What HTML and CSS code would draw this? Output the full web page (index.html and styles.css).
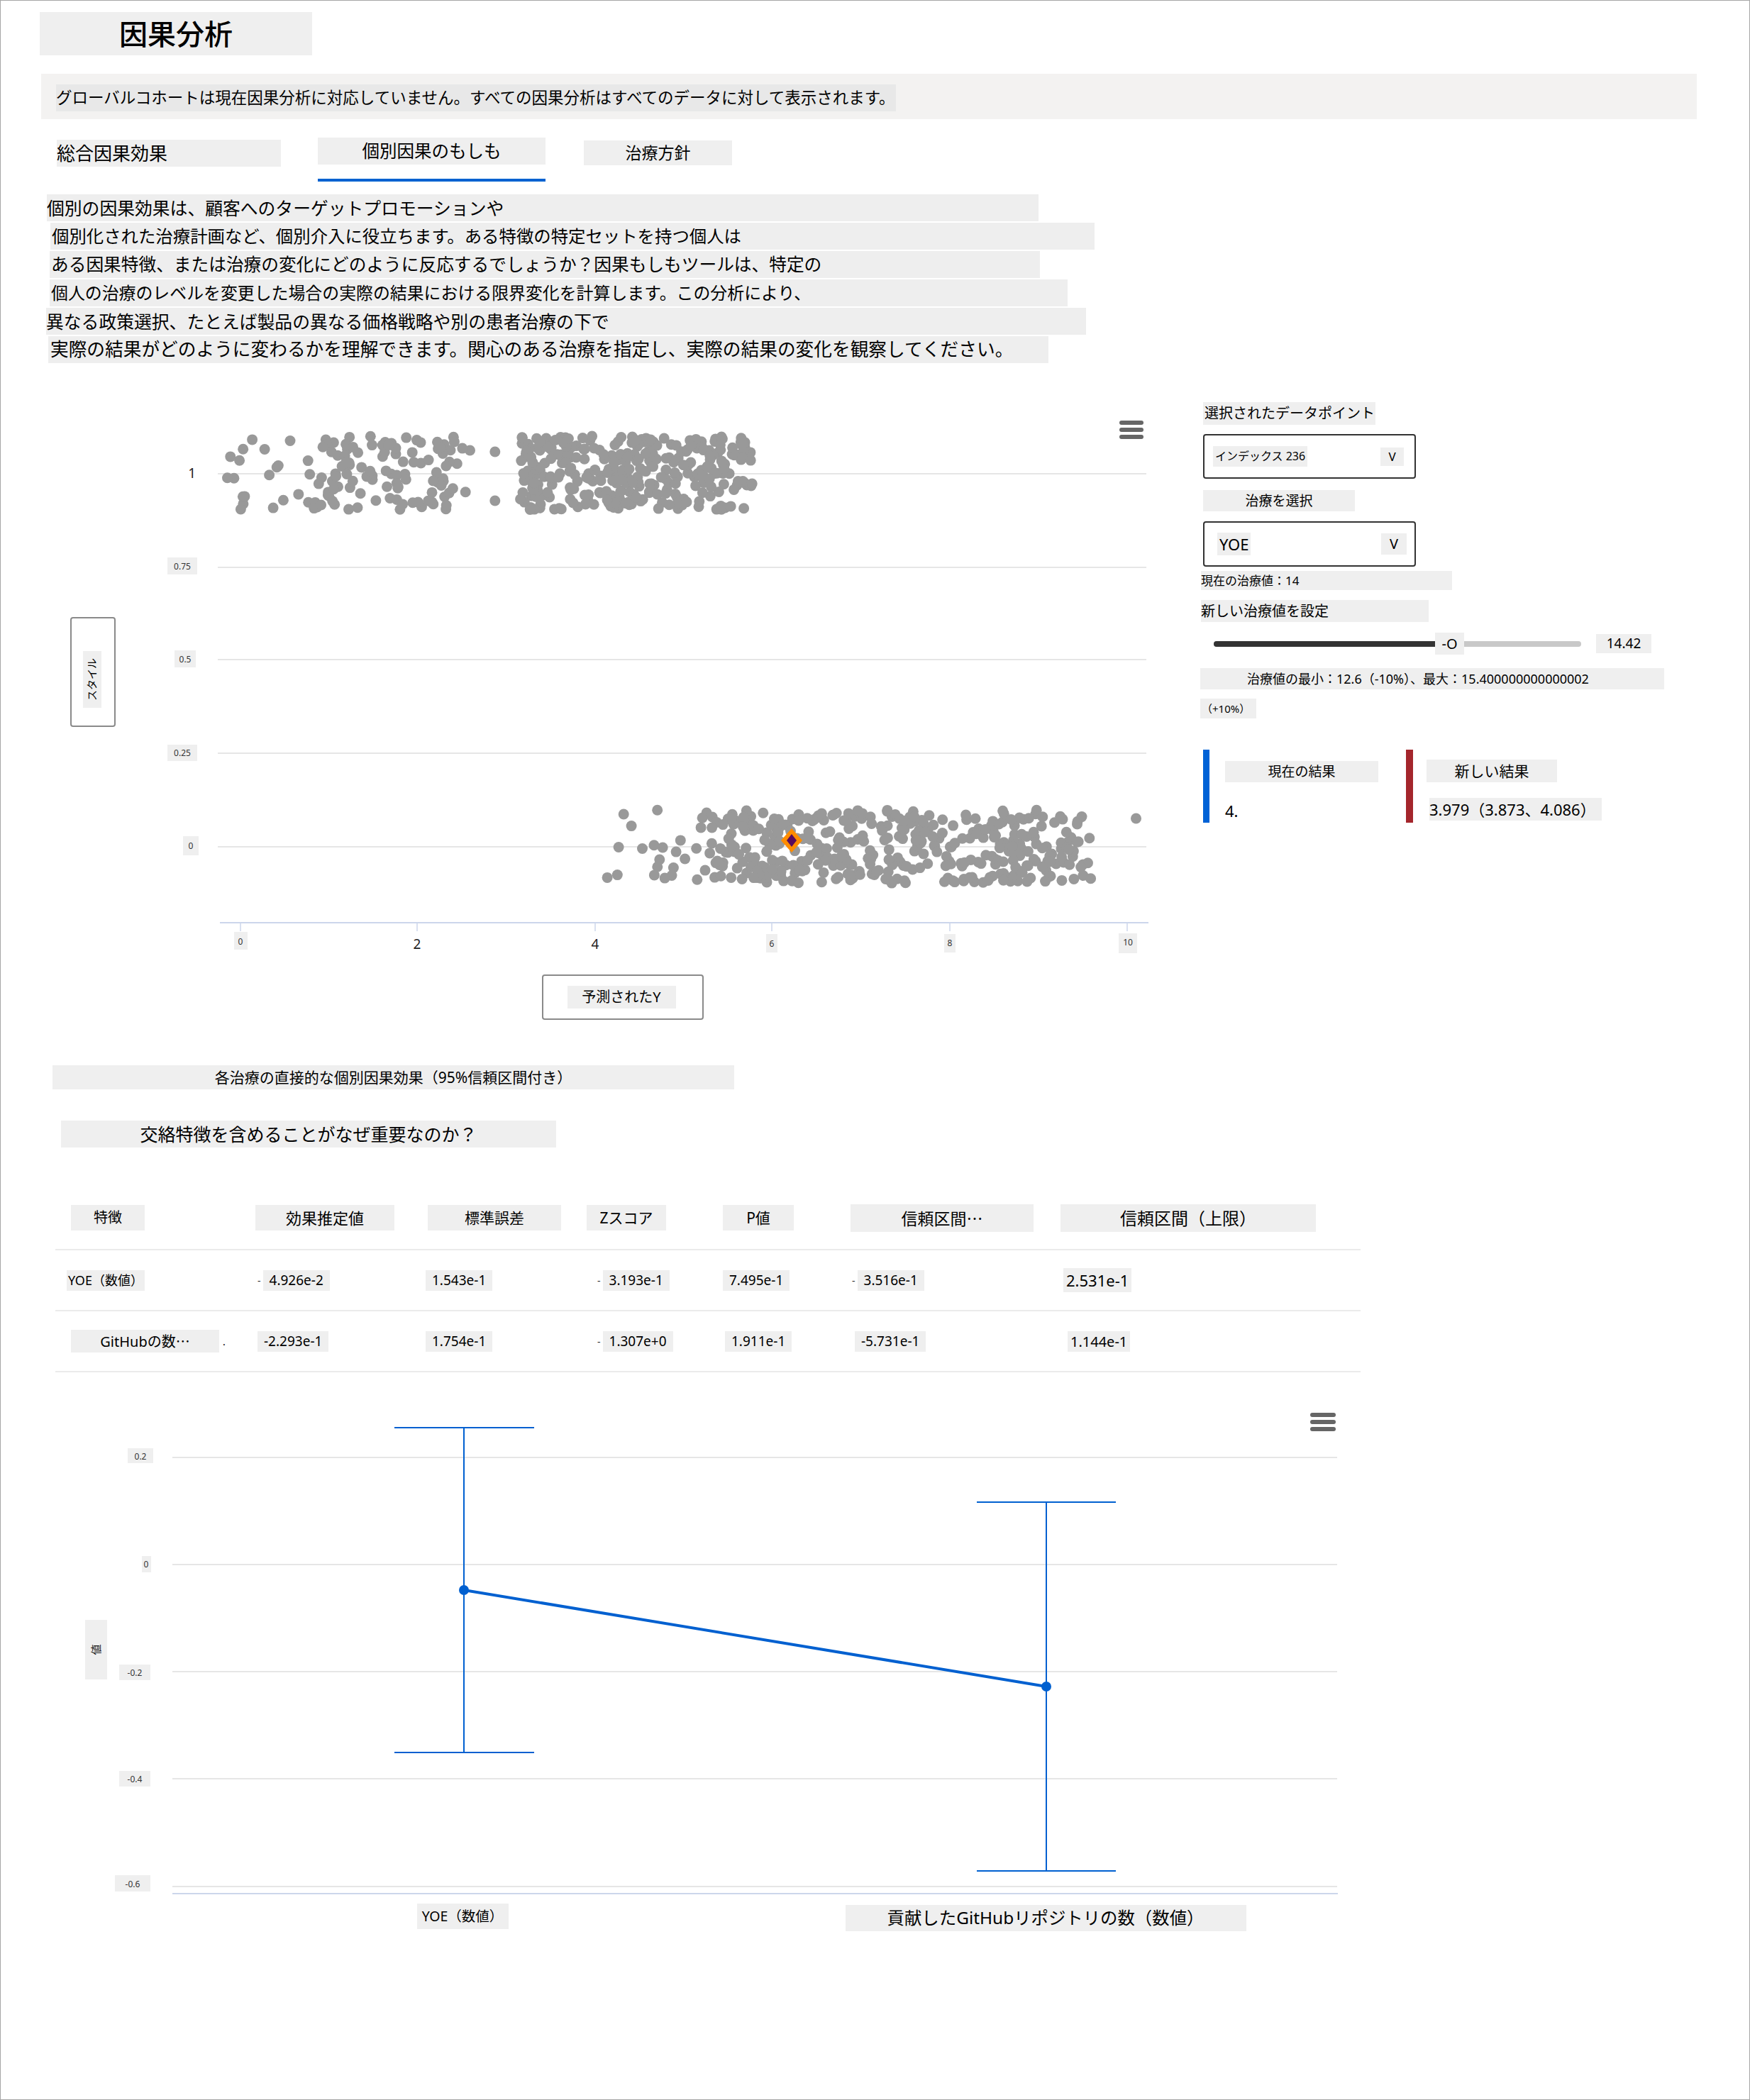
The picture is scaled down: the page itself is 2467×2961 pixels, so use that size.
FILE: index.html
```html
<!DOCTYPE html>
<html lang="ja">
<head>
<meta charset="utf-8">
<title>因果分析</title>
<link rel="stylesheet" href="styles.css">
</head>
<body>
<div class="page">
  <div class="title-box"><h1 class="title">因果分析</h1></div>

  <div class="notice"><span class="notice-text">グローバルコホートは現在因果分析に対応していません。すべての因果分析はすべてのデータに対して表示されます。</span></div>

  <div class="tabs">
    <div class="tab tab-1">総合因果効果</div>
    <div class="tab-group">
      <div class="tab tab-2">個別因果のもしも</div>
      <div class="tab-underline"></div>
    </div>
    <div class="tab tab-3">治療方針</div>
  </div>

  <div class="intro">
    <div class="line l1">個別の因果効果は、顧客へのターゲットプロモーションや</div>
    <div class="line l2">個別化された治療計画など、個別介入に役立ちます。ある特徴の特定セットを持つ個人は</div>
    <div class="line l3">ある因果特徴、または治療の変化にどのように反応するでしょうか？因果もしもツールは、特定の</div>
    <div class="line l4">個人の治療のレベルを変更した場合の実際の結果における限界変化を計算します。この分析により、</div>
    <div class="line l5">異なる政策選択、たとえば製品の異なる価格戦略や別の患者治療の下で</div>
    <div class="line l6">実際の結果がどのように変わるかを理解できます。関心のある治療を指定し、実際の結果の変化を観察してください。</div>
  </div>

  <div class="main">
    <svg class="scatter" width="1600" height="900" viewBox="60 560 1600 900" xmlns="http://www.w3.org/2000/svg">
      <g class="grid">
        <line x1="307" y1="669" x2="1616" y2="669"/>
        <line x1="307" y1="801" x2="1616" y2="801"/>
        <line x1="307" y1="931" x2="1616" y2="931"/>
        <line x1="307" y1="1063" x2="1616" y2="1063"/>
        <line x1="307" y1="1195" x2="1616" y2="1195"/>
      </g>
      <line class="axis" x1="310" y1="1302" x2="1619" y2="1302"/>
      <g class="ticks">
        <line x1="339" y1="1302" x2="339" y2="1314"/>
        <line x1="588" y1="1302" x2="588" y2="1314"/>
        <line x1="839" y1="1302" x2="839" y2="1314"/>
        <line x1="1088" y1="1302" x2="1088" y2="1314"/>
        <line x1="1339" y1="1302" x2="1339" y2="1314"/>
        <line x1="1589" y1="1302" x2="1589" y2="1314"/>
      </g>
      <g class="lblbg">
        <rect x="236" y="787" width="42" height="24"/>
        <rect x="246" y="918" width="30" height="24"/>
        <rect x="236" y="1051" width="42" height="23"/>
        <rect x="258" y="1180" width="22" height="27"/>
        <rect x="330" y="1315" width="19" height="25"/>
        <rect x="1080" y="1318" width="16" height="26"/>
        <rect x="1331" y="1318" width="16" height="26"/>
        <rect x="1577" y="1317" width="26" height="28"/>
      </g>
      <g class="lbl">
        <text class="big" x="276" y="675" text-anchor="end">1</text>
        <text x="257" y="804" text-anchor="middle">0.75</text>
        <text x="261" y="935" text-anchor="middle">0.5</text>
        <text x="257" y="1067" text-anchor="middle">0.25</text>
        <text x="269" y="1198" text-anchor="middle">0</text>
        <text x="339" y="1333" text-anchor="middle">0</text>
        <text class="big" x="588" y="1339" text-anchor="middle">2</text>
        <text class="big" x="839" y="1339" text-anchor="middle">4</text>
        <text x="1088" y="1336" text-anchor="middle">6</text>
        <text x="1339" y="1335" text-anchor="middle">8</text>
        <text x="1590" y="1334" text-anchor="middle">10</text>
      </g>
      <g id="scatter-points" class="pts"></g>
      <polygon class="sel-outer" points="1116,1169 1131,1186 1116,1203 1101,1186"/>
      <polygon class="sel-inner" points="1116,1177 1123,1186 1116,1195 1109,1186"/>
      <g class="menu">
        <rect x="1578" y="594" width="34" height="6" rx="3"/>
        <rect x="1578" y="604" width="34" height="6" rx="3"/>
        <rect x="1578" y="614" width="34" height="6" rx="3"/>
      </g>
      <rect class="title-frame" x="100" y="872" width="62" height="153" rx="3"/>
      <rect class="lblbg-r" x="117" y="919" width="26" height="80"/>
      <text class="axis-title-sm" transform="translate(135 959) rotate(-90)" text-anchor="middle">スタイル</text>
      <rect class="title-frame" x="765" y="1376" width="226" height="62" rx="3"/>
      <rect class="lblbg-r" x="800" y="1391" width="153" height="32"/>
      <text class="axis-title" x="876" y="1414" text-anchor="middle">予測されたY</text>
    </svg>

    <div class="panel">
      <div class="p-label">選択されたデータポイント</div>
      <div class="dropdown dd1">
        <span class="dd-text">インデックス 236</span>
        <span class="dd-chev">V</span>
      </div>
      <div class="p-select-label">治療を選択</div>
      <div class="dropdown dd2">
        <span class="dd-text">YOE</span>
        <span class="dd-chev">V</span>
      </div>
      <div class="p-current">現在の治療値：14</div>
      <div class="p-newlabel">新しい治療値を設定</div>
      <div class="slider-row">
        <div class="slider">
          <div class="slider-fill"></div>
          <div class="slider-thumb">-O</div>
        </div>
        <div class="slider-value">14.42</div>
      </div>
      <div class="p-range">治療値の最小：12.6（-10%）、最大：15.400000000000002</div>
      <div class="p-range2">（+10%）</div>
      <div class="results">
        <div class="result result-cur">
          <div class="bar bar-blue"></div>
          <div class="res-body">
            <div class="res-label">現在の結果</div>
            <div class="res-value cur-value">4.</div>
          </div>
        </div>
        <div class="result result-new">
          <div class="bar bar-red"></div>
          <div class="res-body new-body">
            <div class="res-label new-label">新しい結果</div>
            <div class="res-value new-value">3.979（3.873、4.086）</div>
          </div>
        </div>
      </div>
    </div>
  </div>

  <div class="sec-title">各治療の直接的な個別因果効果（95%信頼区間付き）</div>
  <div class="why">交絡特徴を含めることがなぜ重要なのか？</div>

  <div class="tbl">
    <div class="trow thead">
      <div class="cell"><span class="hbox h1">特徴</span></div>
      <div class="cell"><span class="hbox h2">効果推定値</span></div>
      <div class="cell"><span class="hbox h3">標準誤差</span></div>
      <div class="cell"><span class="hbox h4">Zスコア</span></div>
      <div class="cell"><span class="hbox h5">P値</span></div>
      <div class="cell"><span class="hbox h6">信頼区間<span class="ell">…</span></span></div>
      <div class="cell"><span class="hbox h7">信頼区間（上限）</span></div>
    </div>
    <div class="trow r1">
      <div class="cell"><span class="vbox name">YOE（数値）</span></div>
      <div class="cell"><span class="neg">-</span><span class="vbox">4.926e-2</span></div>
      <div class="cell"><span class="vbox">1.543e-1</span></div>
      <div class="cell"><span class="neg">-</span><span class="vbox">3.193e-1</span></div>
      <div class="cell"><span class="vbox">7.495e-1</span></div>
      <div class="cell"><span class="neg">-</span><span class="vbox">3.516e-1</span></div>
      <div class="cell"><span class="vbox big">2.531e-1</span></div>
    </div>
    <div class="trow r2">
      <div class="cell"><span class="vbox name wide">GitHubの数<span class="ell">…</span></span><span class="dot">.</span></div>
      <div class="cell"><span class="vbox">-2.293e-1</span></div>
      <div class="cell"><span class="vbox">1.754e-1</span></div>
      <div class="cell"><span class="neg">-</span><span class="vbox">1.307e+0</span></div>
      <div class="cell"><span class="vbox">1.911e-1</span></div>
      <div class="cell"><span class="vbox">-5.731e-1</span></div>
      <div class="cell"><span class="vbox mid">1.144e-1</span></div>
    </div>
  </div>

  <svg class="ci-chart" width="1880" height="780" viewBox="60 1960 1880 780" xmlns="http://www.w3.org/2000/svg">
    <g class="grid">
      <line x1="243" y1="2058" x2="1885" y2="2058"/>
      <line x1="243" y1="2209" x2="1885" y2="2209"/>
      <line x1="243" y1="2360" x2="1885" y2="2360"/>
      <line x1="243" y1="2511" x2="1885" y2="2511"/>
      <line x1="243" y1="2663" x2="1885" y2="2663"/>
    </g>
    <line class="axis" x1="243" y1="2673" x2="1886" y2="2673"/>
    <g class="lblbg">
      <rect x="180" y="2045" width="36" height="21"/>
      <rect x="200" y="2197" width="13" height="23"/>
      <rect x="168" y="2350" width="44" height="22"/>
      <rect x="168" y="2500" width="44" height="22"/>
      <rect x="162" y="2647" width="50" height="23"/>
      <rect x="120" y="2287" width="31" height="84"/>
    </g>
    <g class="lbl">
      <text x="198" y="2061" text-anchor="middle">0.2</text>
      <text x="206" y="2213" text-anchor="middle">0</text>
      <text x="190" y="2366" text-anchor="middle">-0.2</text>
      <text x="190" y="2516" text-anchor="middle">-0.4</text>
      <text x="187" y="2664" text-anchor="middle">-0.6</text>
      <text class="ytitle" transform="translate(141 2329) rotate(-90)" text-anchor="middle">値</text>
    </g>
    <g class="err">
      <line x1="654" y1="2016" x2="654" y2="2474"/>
      <line x1="556" y1="2016" x2="753" y2="2016"/>
      <line x1="556" y1="2474" x2="753" y2="2474"/>
      <line x1="1475" y1="2121" x2="1475" y2="2641"/>
      <line x1="1377" y1="2121" x2="1573" y2="2121"/>
      <line x1="1377" y1="2641" x2="1573" y2="2641"/>
    </g>
    <line class="series" x1="654" y1="2245" x2="1475" y2="2381"/>
    <circle class="marker" cx="654" cy="2245" r="7"/>
    <circle class="marker" cx="1475" cy="2381" r="7"/>
    <g class="menu">
      <rect x="1847" y="1995" width="36" height="6" rx="3"/>
      <rect x="1847" y="2005" width="36" height="6" rx="3"/>
      <rect x="1847" y="2015" width="36" height="6" rx="3"/>
    </g>
    <rect class="lblbg-r" x="588" y="2687" width="129" height="36"/>
    <text class="xcat" x="652" y="2712" text-anchor="middle">YOE（数値）</text>
    <rect class="lblbg-r" x="1192" y="2689" width="565" height="37"/>
    <text class="xcat xcat-lg" x="1474" y="2716" text-anchor="middle">貢献したGitHubリポジトリの数（数値）</text>
  </svg>
</div>
<script src="script.js"></script>
</body>
</html>
```

FILE: styles.css
```css
* { box-sizing: border-box; }
html, body { margin: 0; padding: 0; background: #ffffff; }
body {
  font-family: "Noto Sans", "Noto Sans CJK JP", sans-serif;
  color: #000000;
}
.page {
  width: 2467px;
  height: 2961px;
  border: 1px solid #a6a6a6;
  overflow: hidden;
}

/* title */
.title-box {
  margin: 16px 0 0 55px;
  width: 384px;
  height: 61px;
  background: #efefef;
  display: flex;
  align-items: center;
  justify-content: center;
}
.title { margin: 0; font-size: 40px; font-weight: 500; line-height: 1; }

/* notice */
.notice {
  margin: 26px 0 0 57px;
  width: 2334px;
  height: 64px;
  background: #f3f2f1;
  padding: 15px 0 0 21px;
}
.notice-text {
  display: block;
  width: 1184px;
  height: 38px;
  background: #e8e8e8;
  font-size: 22.5px;
  line-height: 38px;
  white-space: nowrap;
}

/* tabs */
.tabs { display: flex; align-items: flex-start; margin: 26px 0 0 79px; }
.tab { background: #efefef; white-space: nowrap; }
.tab-1 { margin-top: 3px; width: 316px; height: 38px; font-size: 26px; line-height: 38px; }
.tab-group { margin-left: 52px; width: 321px; }
.tab-2 { height: 38px; font-size: 24.5px; line-height: 38px; text-align: center; }
.tab-underline { margin-top: 20px; height: 4px; background: #0062d0; }
.tab-3 { margin: 4px 0 0 54px; width: 209px; height: 35px; font-size: 23px; line-height: 35px; text-align: center; }

/* intro */
.intro { margin-top: 18px; }
.line {
  height: 38px;
  margin-top: 2px;
  background: #eeeeee;
  line-height: 38px;
  white-space: nowrap;
}
.l1 { margin: 0 0 0 65px; width: 1398px; font-size: 24.8px; }
.l2 { margin-left: 70px; width: 1472px; padding-left: 2px; font-size: 24.4px; }
.l3 { margin-left: 69px; width: 1396px; padding-left: 2px; font-size: 24.7px; }
.l4 { margin-left: 69px; width: 1435px; padding-left: 2px; font-size: 23.9px; }
.l5 { margin-left: 64px; width: 1466px; font-size: 24.8px; }
.l6 { margin-left: 67px; width: 1410px; padding-left: 3px; font-size: 25.7px; }

/* main area */
.main { display: flex; align-items: flex-start; margin-top: 47px; }
.scatter { display: block; flex-shrink: 0; margin-left: 59px; }
.grid line { stroke: #e6e6e6; stroke-width: 2; }
.axis { stroke: #ccd6eb; stroke-width: 2; }
.ticks line { stroke: #ccd6eb; stroke-width: 1.5; }
.lblbg rect, .lblbg-r { fill: #efefef; }
.lbl text { font-family: "Noto Sans", "Noto Sans CJK JP", sans-serif; font-size: 12px; fill: #333333; }
.lbl text.big { font-size: 19px; fill: #222222; }
.pts circle { fill: #999999; }
.sel-outer { fill: #ff8c00; }
.sel-inner { fill: #5a0b5c; }
.menu rect { fill: #666666; }
.title-frame { fill: #ffffff; stroke: #8a8a8a; stroke-width: 2; }
.axis-title { font-family: "Noto Sans", "Noto Sans CJK JP", sans-serif; font-size: 20px; fill: #000000; }
.axis-title-sm { font-family: "Noto Sans CJK JP", sans-serif; font-size: 15px; fill: #000000; }

/* right panel */
.panel {
  margin-left: 32px;
  padding-top: 8px;
  width: 700px;
  display: flex;
  flex-direction: column;
  align-items: flex-start;
}
.p-label {
  margin-left: 4px;
  width: 243px;
  height: 32px;
  background: #efefef;
  font-size: 20px;
  line-height: 32px;
  padding-left: 2px;
  white-space: nowrap;
}
.dropdown {
  margin: 13px 0 0 4px;
  width: 300px;
  height: 63px;
  border: 2px solid #333333;
  border-radius: 4px;
  display: flex;
  align-items: center;
  justify-content: space-between;
  padding: 0 15px 0 12px;
}
.dd-text { background: #efefef; font-size: 16px; height: 29px; line-height: 29px; padding: 0 3px; }
.dd-chev { background: #efefef; font-size: 17px; width: 33px; height: 26px; line-height: 26px; text-align: center; }
.p-select-label {
  margin: 16px 0 0 4px;
  width: 214px;
  height: 30px;
  background: #efefef;
  font-size: 19px;
  line-height: 30px;
  text-align: center;
}
.dd2 { margin-top: 14px; height: 64px; padding-left: 18px; padding-right: 11px; }
.dd2 .dd-text { font-size: 22px; height: 32px; line-height: 32px; }
.dd2 .dd-chev { font-size: 20px; width: 36px; height: 30px; line-height: 30px; }
.p-current {
  margin: 6px 0 0 1px;
  width: 354px;
  height: 27px;
  background: #efefef;
  font-size: 17px;
  line-height: 27px;
}
.p-newlabel {
  margin: 14px 0 0 1px;
  width: 321px;
  height: 31px;
  background: #efefef;
  font-size: 20px;
  line-height: 31px;
}
.slider-row { margin-top: 15px; display: flex; align-items: center; padding-left: 19px; height: 31px; }
.slider { position: relative; width: 518px; height: 8px; background: #c8c8c8; border-radius: 4px; }
.slider-fill { width: 332px; height: 100%; background: #333333; border-radius: 4px; }
.slider-thumb {
  position: absolute;
  left: 312px;
  top: -12px;
  width: 41px;
  height: 31px;
  background: #efefef;
  font-size: 20px;
  line-height: 31px;
  text-align: center;
}
.slider-value {
  margin-left: 21px;
  width: 78px;
  height: 27px;
  background: #efefef;
  font-size: 19px;
  line-height: 27px;
  text-align: center;
}
.p-range {
  margin-top: 19px;
  width: 654px;
  height: 30px;
  background: #efefef;
  font-size: 18px;
  line-height: 30px;
  padding-left: 66px;
  white-space: nowrap;
}
.p-range2 {
  margin-top: 13px;
  width: 79px;
  height: 28px;
  background: #efefef;
  font-size: 15px;
  line-height: 28px;
  padding-left: 2px;
  white-space: nowrap;
}
.results { margin: 44px 0 0 4px; display: flex; }
.result { display: flex; height: 103px; }
.result-cur { width: 286px; }
.bar { width: 9px; height: 103px; flex-shrink: 0; }
.bar-blue { background: #0062d6; }
.bar-red { background: #a4262c; width: 10px; }
.res-body { padding: 16px 0 0 22px; display: flex; flex-direction: column; align-items: flex-start; }
.res-label {
  width: 216px;
  height: 30px;
  background: #efefef;
  font-size: 19px;
  line-height: 30px;
  text-align: center;
}
.res-value { margin-top: 24px; font-size: 22px; height: 32px; line-height: 32px; white-space: nowrap; }
.new-body { padding: 14px 0 0 19px; }
.new-label { width: 184px; height: 32px; line-height: 32px; font-size: 21px; }
.new-value { margin: 22px 0 0 4px; width: 243px; background: #efefef; }

/* section titles */
.sec-title {
  margin: 43px 0 0 73px;
  width: 961px;
  height: 34px;
  background: #efefef;
  font-size: 21px;
  line-height: 34px;
  text-align: center;
  white-space: nowrap;
}
.why {
  margin: 44px 0 0 85px;
  width: 698px;
  height: 38px;
  background: #efefef;
  font-size: 25px;
  line-height: 38px;
  text-align: center;
  white-space: nowrap;
}

/* table */
.tbl { margin: 80px 0 0 77px; width: 1840px; }
.trow {
  display: grid;
  grid-template-columns: 280px 240px 227px 191px 180px 296px 426px;
  border-bottom: 2px solid #ebebeb;
}
.thead { height: 65px; align-items: start; }
.r1, .r2 { height: 86px; align-items: center; }
.cell { display: flex; align-items: center; white-space: nowrap; }
.ell { font-family: "Noto Sans CJK JP", sans-serif; }
.hbox {
  display: block;
  height: 36px;
  margin-top: 1px;
  background: #efefef;
  font-size: 21px;
  line-height: 36px;
  text-align: center;
}
.h1 { width: 104px; margin-left: 22px; font-size: 20px; }
.h2 { width: 196px; margin-left: 2px; font-size: 22px; }
.h3 { width: 188px; margin-left: 5px; }
.h4 { width: 112px; margin-left: 2px; }
.h5 { width: 100px; margin-left: 3px; }
.h6 { width: 258px; margin-left: 3px; height: 39px; margin-top: 0; line-height: 39px; font-size: 23px; }
.h7 { width: 360px; margin-left: 3px; height: 39px; margin-top: 0; line-height: 39px; font-size: 24px; }
.vbox {
  display: block;
  height: 29px;
  background: #efefef;
  font-size: 19px;
  line-height: 29px;
  padding: 0 9px;
}
.vbox.big { font-size: 22px; height: 34px; line-height: 34px; padding: 0 4px; }
.vbox.mid { font-size: 20px; padding: 0 4px; }
.name { font-size: 18px; padding: 0 2px; }
.name.wide { width: 209px; text-align: center; font-size: 20px; height: 32px; line-height: 32px; }
.neg { font-size: 14px; margin-right: 3px; color: #333333; }
.dot { font-size: 14px; margin-left: 5px; }
.r1 .cell:nth-child(1) { padding-left: 16px; }
.r1 .cell:nth-child(2) { padding-left: 5px; }
.r1 .cell:nth-child(3) { padding-left: 2px; }
.r1 .cell:nth-child(4) { padding-left: 17px; }
.r1 .cell:nth-child(5) { padding-left: 3px; }
.r1 .cell:nth-child(6) { padding-left: 5px; }
.r1 .cell:nth-child(7) { padding-left: 7px; }
.r2 .cell:nth-child(1) { padding-left: 22px; }
.r2 .cell:nth-child(2) { padding-left: 5px; }
.r2 .cell:nth-child(3) { padding-left: 2px; }
.r2 .cell:nth-child(4) { padding-left: 17px; }
.r2 .cell:nth-child(5) { padding-left: 6px; }
.r2 .cell:nth-child(6) { padding-left: 9px; }
.r2 .cell:nth-child(7) { padding-left: 13px; }

/* CI chart */
.ci-chart { display: block; margin: 22px 0 0 59px; }
.err line { stroke: #0060d0; stroke-width: 2; }
.series { stroke: #0060d0; stroke-width: 4; }
.marker { fill: #0060d0; }
.lbl text.ytitle { font-family: "Noto Sans CJK JP", sans-serif; font-size: 15px; fill: #222222; }
.xcat { font-family: "Noto Sans", "Noto Sans CJK JP", sans-serif; font-size: 19.5px; fill: #000000; }
.xcat-lg { font-size: 24.4px; }
```

FILE: script.js
```js
(function () {
  var NS = 'http://www.w3.org/2000/svg';
  var g = document.getElementById('scatter-points');
  if (!g) return;
  var seed = 20240611;
  function rnd() {
    seed = (seed + 0x6D2B79F5) | 0;
    var t = Math.imul(seed ^ (seed >>> 15), 1 | seed);
    t = (t + Math.imul(t ^ (t >>> 7), 61 | t)) ^ t;
    return ((t ^ (t >>> 14)) >>> 0) / 4294967296;
  }
  function add(x, cy) {
    var c = document.createElementNS(NS, 'circle');
    c.setAttribute('cx', (339 + 125 * x).toFixed(1));
    c.setAttribute('cy', cy.toFixed(1));
    c.setAttribute('r', '7.5');
    g.appendChild(c);
  }
  function jit(center) { return center + (rnd() * 2 - 1) * 52; }
  var i;
  for (i = 0; i < 60; i++) add(-0.2 + 2.86 * rnd(), jit(668));
  for (i = 0; i < 70; i++) add(0.9 + 1.5 * rnd(), jit(668));
  add(2.87, 638);
  add(2.87, 707);
  for (i = 0; i < 320; i++) add(3.15 + 2.62 * rnd(), jit(668));
  for (i = 0; i < 28; i++) add(4.1 + 1.3 * rnd(), jit(1195));
  for (i = 0; i < 380; i++) add(5.3 + 4.3 * rnd(), jit(1195));
  add(10.1, 1155);
})();
```
